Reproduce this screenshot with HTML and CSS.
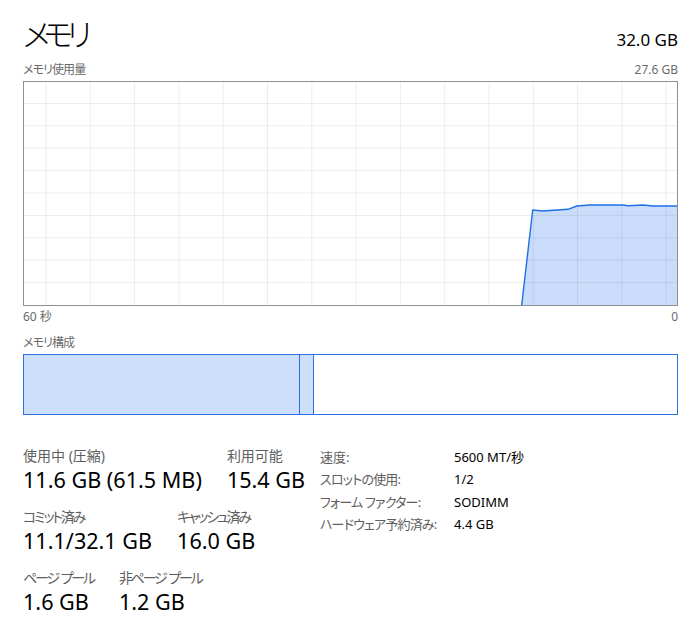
FILE: index.html
```html
<!DOCTYPE html>
<html lang="ja">
  <head>
    <meta charset="UTF-8" />
    <meta name="viewport" content="width=device-width, initial-scale=1.0" />
    <title>メモリ</title>
    <link rel="stylesheet" href="styles.css">
  </head>
  <body>
    <div class="page">
      <div class="header">
        <h1 class="title">メモリ</h1>
        <div class="total">32.0 GB</div>
      </div>

      <div class="axis axis-top">
        <span class="kana">メモリ使用量</span>
        <span>27.6 GB</span>
      </div>

      <div class="chart">
        <svg width="653" height="223" viewBox="0 0 653 223">
          <polygon class="area" points="497.7,223 508.7,128 519,129 544,127.3 552.7,124 566,123 599,123 604,123.7 619,123 629,124 653,124 653,223" />
          <g class="grid">
            <line x1="22" y1="0" x2="22" y2="223" />
            <line x1="66.3" y1="0" x2="66.3" y2="223" />
            <line x1="110.6" y1="0" x2="110.6" y2="223" />
            <line x1="154.9" y1="0" x2="154.9" y2="223" />
            <line x1="199.2" y1="0" x2="199.2" y2="223" />
            <line x1="243.5" y1="0" x2="243.5" y2="223" />
            <line x1="287.8" y1="0" x2="287.8" y2="223" />
            <line x1="332.1" y1="0" x2="332.1" y2="223" />
            <line x1="376.4" y1="0" x2="376.4" y2="223" />
            <line x1="420.7" y1="0" x2="420.7" y2="223" />
            <line x1="465" y1="0" x2="465" y2="223" />
            <line x1="509.3" y1="0" x2="509.3" y2="223" />
            <line x1="553.6" y1="0" x2="553.6" y2="223" />
            <line x1="597.9" y1="0" x2="597.9" y2="223" />
            <line x1="642.2" y1="0" x2="642.2" y2="223" />
            <line x1="0" y1="21.4" x2="653" y2="21.4" />
            <line x1="0" y1="43.8" x2="653" y2="43.8" />
            <line x1="0" y1="66.2" x2="653" y2="66.2" />
            <line x1="0" y1="88.6" x2="653" y2="88.6" />
            <line x1="0" y1="111" x2="653" y2="111" />
            <line x1="0" y1="133.4" x2="653" y2="133.4" />
            <line x1="0" y1="155.8" x2="653" y2="155.8" />
            <line x1="0" y1="178.2" x2="653" y2="178.2" />
            <line x1="0" y1="200.6" x2="653" y2="200.6" />
          </g>
          <polyline class="usage-line" points="497.7,223 508.7,128 519,129 544,127.3 552.7,124 566,123 599,123 604,123.7 619,123 629,124 653,124" />
        </svg>
      </div>

      <div class="axis axis-bottom">
        <span>60 秒</span>
        <span>0</span>
      </div>

      <div class="axis section-label"><span class="kana">メモリ構成</span></div>

      <div class="composition">
        <div class="seg seg-used"></div>
        <div class="seg seg-modified"></div>
        <div class="seg seg-free"></div>
      </div>

      <div class="details">
        <div class="stats">
          <div class="stat-row">
            <div class="stat">
              <div class="stat-label">使用中 (圧縮)</div>
              <div class="stat-value">11.6 GB (61.5 MB)</div>
            </div>
            <div class="stat">
              <div class="stat-label">利用可能</div>
              <div class="stat-value">15.4 GB</div>
            </div>
          </div>
          <div class="stat-row">
            <div class="stat">
              <div class="stat-label kana">コミット済み</div>
              <div class="stat-value">11.1/32.1 GB</div>
            </div>
            <div class="stat">
              <div class="stat-label kana">キャッシュ済み</div>
              <div class="stat-value">16.0 GB</div>
            </div>
          </div>
          <div class="stat-row">
            <div class="stat">
              <div class="stat-label kana">ページ&nbsp; プール</div>
              <div class="stat-value">1.6 GB</div>
            </div>
            <div class="stat">
              <div class="stat-label kana">非ページ&nbsp; プール</div>
              <div class="stat-value">1.2 GB</div>
            </div>
          </div>
        </div>

        <dl class="props">
          <dt>速度:</dt>
          <dd>5600 MT/秒</dd>
          <dt class="kana">スロットの使用:</dt>
          <dd>1/2</dd>
          <dt class="kana">フォーム ファクター:</dt>
          <dd>SODIMM</dd>
          <dt class="kana">ハードウェア予約済み:</dt>
          <dd>4.4 GB</dd>
        </dl>
      </div>
    </div>
  </body>
</html>
```

FILE: styles.css
```css
body {
  margin: 0;
  background-color: #fff;
  color: #000;
  font-family: "Noto Sans", "Noto Sans CJK JP", sans-serif;
  font-feature-settings: "palt";
}

.page {
  width: 655px;
  padding: 16px 22px 0 23px;
}

/* katakana in the reference font is narrower */
.kana {
  letter-spacing: -1.5px;
}

.header {
  display: flex;
  justify-content: space-between;
  align-items: baseline;
}

.title {
  margin: 0;
  font-size: 31px;
  font-weight: 300;
  line-height: 36px;
  letter-spacing: -6.5px;
}

.total {
  font-size: 17px;
  line-height: 24px;
}

.axis {
  display: flex;
  justify-content: space-between;
  font-size: 12px;
  line-height: 16px;
  color: #6b6b6b;
}

.axis .kana {
  letter-spacing: -0.9px;
}

.axis-top {
  margin-top: 10px;
}

.chart {
  margin-top: 3px;
  border: 1px solid #8f8f8f;
}

.chart svg {
  display: block;
}

.grid line {
  stroke: rgba(0, 0, 0, 0.07);
  stroke-width: 1;
}

.area {
  fill: #c9ddfb;
}

.usage-line {
  fill: none;
  stroke: #1f6fe5;
  stroke-width: 1.4;
}

.axis-bottom {
  margin-top: 3px;
}

.section-label {
  margin-top: 10px;
}

.composition {
  display: flex;
  height: 59px;
  margin-top: 3px;
  border: 1px solid #2c6fe2;
}

.seg {
  box-sizing: border-box;
}

.seg-used {
  width: 276px;
  background-color: #cce0fc;
  border-right: 1px solid #2c6fe2;
}

.seg-modified {
  width: 14px;
  background-color: #cce0fc;
  border-right: 1px solid #2c6fe2;
}

.seg-free {
  flex: 1;
  background-color: #fff;
}

.details {
  display: flex;
  align-items: flex-start;
  margin-top: 31px;
}

.stats {
  width: 297px;
}

.stat-row {
  display: flex;
  gap: 25px;
  margin-bottom: 13px;
}

.stat-label {
  font-size: 14px;
  line-height: 20px;
  color: #5e5e5e;
}

.stat-label.kana {
  letter-spacing: -2.2px;
}

.stat-value {
  font-size: 21.6px;
  line-height: 28px;
}

.props {
  display: grid;
  grid-template-columns: 134px auto;
  margin: 0;
  font-size: 13px;
  line-height: 22.3px;
}

.props dt {
  color: #5e5e5e;
}

.props dt.kana {
  letter-spacing: -0.8px;
}

.props dd {
  margin: 0;
}
```
